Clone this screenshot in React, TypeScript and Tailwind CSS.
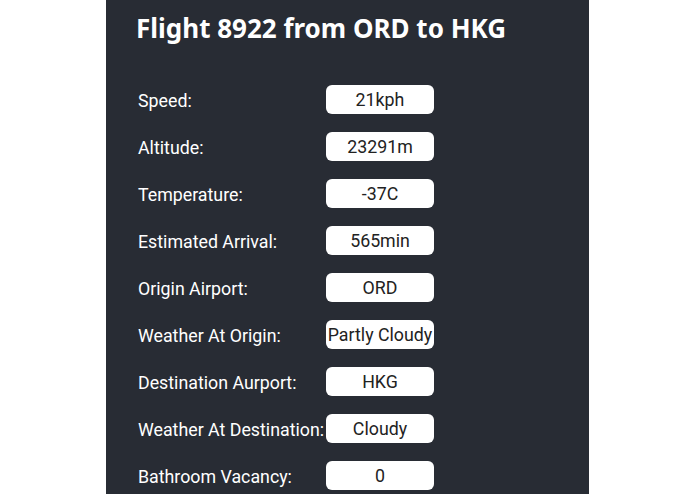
import React from 'react';

const rows: { label: string; value: string }[] = [
    { label: 'Speed:', value: '21kph' },
    { label: 'Altitude:', value: '23291m' },
    { label: 'Temperature:', value: '-37C' },
    { label: 'Estimated Arrival:', value: '565min' },
    { label: 'Origin Airport:', value: 'ORD' },
    { label: 'Weather At Origin:', value: 'Partly Cloudy' },
    { label: 'Destination Aurport:', value: 'HKG' },
    { label: 'Weather At Destination:', value: 'Cloudy' },
    { label: 'Bathroom Vacancy:', value: '0' },
];

export default function App() {
    return (
        <div className="min-h-screen bg-white flex justify-center" style={{ fontFamily: 'Roboto, sans-serif' }}>
            <div className="w-[483px] bg-[#282c34] pl-[30px] pt-[12px] pb-10">
                <h1 className="text-[26px] leading-[32px] font-bold text-white" style={{ fontFamily: '"Noto Sans", sans-serif' }}>
                    Flight 8922 from ORD to HKG
                </h1>

                {/* Flight details */}
                <div className="mt-[41px] flex flex-col gap-[18px]">
                    {rows.map((row) => (
                        <div key={row.label} className="flex items-start h-[29px]">
                            <span className="w-[190px] pl-[2px] text-[17.8px] leading-[31px] text-white whitespace-nowrap">{row.label}</span>
                            <div className="w-[108px] h-[29px] bg-white rounded-[6px] flex items-center justify-center text-[17.8px] leading-[31px] text-[#222] whitespace-nowrap overflow-hidden">
                                {row.value}
                            </div>
                        </div>
                    ))}
                </div>
            </div>
        </div>
    );
}
